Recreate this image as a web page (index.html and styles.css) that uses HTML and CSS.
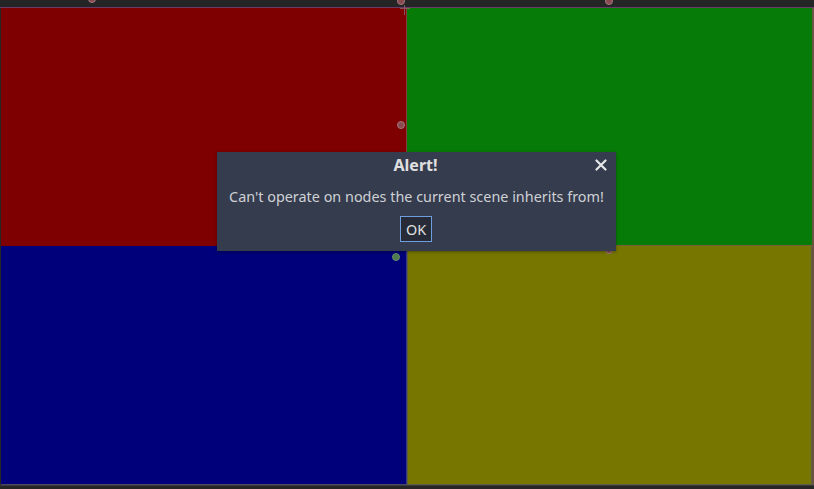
FILE: index.html
```html
<!DOCTYPE html>
<html>
<head>
<meta charset="utf-8">
<link rel="stylesheet" href="styles.css">
</head>
<body>
<div class="editor">
  <div class="topbar"></div>
  <div class="canvas">
    <div class="quad red"></div>
    <div class="quad green"></div>
    <div class="quad blue"></div>
    <div class="quad olive"></div>
  </div>
  <div class="bottombar"></div>

  <span class="handle h1"></span>
  <span class="handle h2"></span>
  <span class="handle h3"></span>
  <span class="handle h4"></span>
  <span class="handle h5 pivot"></span>
  <span class="handle h6"></span>
  <span class="cross"></span>

  <div class="dialog">
    <div class="title">Alert!</div>
    <button class="close" aria-label="Close">
      <svg width="12" height="12" viewBox="0 0 12 12"><path d="M1.5 1.5 L10.5 10.5 M10.5 1.5 L1.5 10.5" stroke="#e6e6e6" stroke-width="2.2" stroke-linecap="round"/></svg>
    </button>
    <div class="message">Can't operate on nodes the current scene inherits from!</div>
    <div class="actions"><button class="ok">OK</button></div>
  </div>
</div>
</body>
</html>
```

FILE: styles.css
```css
html, body {
  margin: 0;
  padding: 0;
  background: #262626;
  font-family: "Noto Sans", "DejaVu Sans", sans-serif;
}
.editor {
  position: relative;
  width: 814px;
  height: 489px;
  overflow: hidden;
  display: flex;
  flex-direction: column;
  background: #262626;
}
.topbar {
  height: 7px;
  background: #252525;
  border-bottom: 1px solid #6a3b6a;
}
.canvas {
  display: grid;
  grid-template-columns: 406px 405px;
  grid-template-rows: 238px 239px;
  margin-left: 1px;
  width: 811px;
  border-right: 2px solid #6b5540;
}
.quad { box-sizing: border-box; }
.red { background: #7f0000; border-right: 1px solid #8a3b3b; }
.green { background: #077b07; border-bottom: 1px solid #7a5f38; }
.blue { background: #00007a; border-right: 1px solid #3a3a80; border-bottom: 1px solid #4a4a6a; }
.olive { background: #777600; border: 1px solid #5e5e40; border-top: none; }
.bottombar {
  flex: 1;
  background: #262626;
  border-top: 1px solid #3a3a3a;
}
.handle {
  position: absolute;
  width: 8px;
  height: 8px;
  border-radius: 50%;
  background: #8a4a4f;
  border: 1px solid #a07a80;
  box-sizing: border-box;
}
.h1 { left: 88px; top: -5px; }
.h2 { left: 397px; top: -3px; }
.h3 { left: 605px; top: -3px; }
.h4 { left: 397px; top: 121px; }
.h5 { left: 392px; top: 253px; }
.h6 { left: 605px; top: 246px; }
.pivot { background: #4e7a4e; border-color: #6a8a6a; }
.cross {
  position: absolute;
  left: 400px;
  top: 5px;
  width: 10px;
  height: 10px;
  background:
    linear-gradient(#8a6a6e, #8a6a6e) 4px 0 / 1px 10px no-repeat,
    linear-gradient(#8a6a6e, #8a6a6e) 0 3px / 10px 1px no-repeat;
  opacity: 0.8;
}
.dialog {
  position: absolute;
  left: 217px;
  top: 152px;
  width: 399px;
  height: 99px;
  background: #353c4e;
  box-shadow: 0 1px 3px rgba(0,0,0,0.35);
  display: flex;
  flex-direction: column;
  align-items: center;
  box-sizing: border-box;
  padding-top: 3px;
}
.title {
  color: #e0e0e0;
  font-weight: bold;
  font-size: 16px;
  line-height: 20px;
  margin-left: -2px;
}
.close {
  position: absolute;
  right: 8px;
  top: 6px;
  width: 14px;
  height: 14px;
  padding: 0;
  border: none;
  background: transparent;
  display: flex;
  align-items: center;
  justify-content: center;
}
.message {
  color: #cfd1d5;
  font-size: 14.4px;
  line-height: 20px;
  margin-top: 12px;
  white-space: nowrap;
}
.actions {
  margin-top: 9px;
  display: flex;
  justify-content: center;
}
.ok {
  width: 32px;
  height: 26px;
  box-sizing: border-box;
  background: #262b37;
  border: 1px solid #6e9ee0;
  color: #e0e0e0;
  font-family: "Noto Sans", "DejaVu Sans", sans-serif;
  font-size: 14.4px;
  padding: 0;
  margin-left: -1px;
}
```
